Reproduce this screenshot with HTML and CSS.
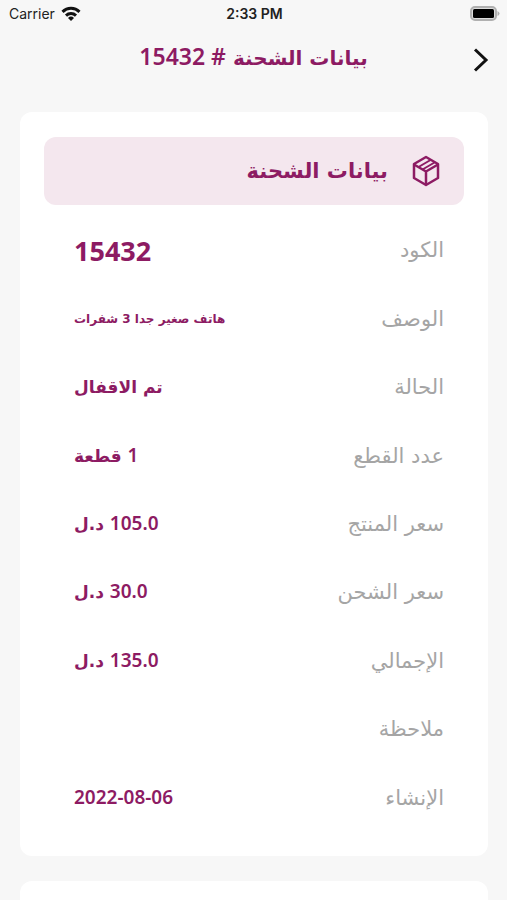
FILE: index.html
```html
<!DOCTYPE html>
<html lang="ar" dir="rtl">
<head>
    <meta charset="UTF-8">
    <meta name="viewport" content="width=device-width, initial-scale=1.0">
    <title>بيانات الشحنة</title>
    <link rel="stylesheet" href="styles.css">
</head>
<body>
    <div class="status" dir="ltr">
        <span class="carrier">Carrier
            <svg width="20" height="16" viewBox="0 0 20 16" fill="none" stroke="#111" stroke-width="3">
                <path d="M1.5 5.8a12.2 12.2 0 0 1 17 0"/>
                <path d="M5 9.6a7.2 7.2 0 0 1 10 0"/>
                <path d="M10 15l-3-3.1a4.3 4.3 0 0 1 6 0z" fill="#111" stroke="none"/>
            </svg>
        </span>
        <span class="time">2:33 PM</span>
        <span class="battery">
            <svg width="31" height="15" viewBox="0 0 31 15">
                <rect x="2" y="1" width="25" height="13" rx="4" fill="#ddd" stroke="#b0b0b0" stroke-width="2"/>
                <rect x="4" y="3" width="21" height="9" rx="1.5" fill="#000"/>
                <path d="M28.5 5v5q2-1 2-2.5t-2-2.5z" fill="#b0b0b0"/>
            </svg>
        </span>
    </div>
    <header class="top">
        <button class="back" aria-label="رجوع">
            <svg width="16" height="24" viewBox="0 0 16 24" fill="none" stroke="#111" stroke-width="3">
                <path d="M2 1.5L13 12L2 22.5"/>
            </svg>
        </button>
        <h1>بيانات الشحنة <span class="num"># 15432</span></h1>
    </header>
    <main>
        <section class="card">
            <h2>
                <svg width="28" height="32" viewBox="0 0 28 32" fill="none" stroke="#8d1b63" stroke-width="2.5" stroke-linejoin="round">
                    <path d="M14 2L26 9V23L14 30L2 23V9z"/>
                    <path d="M2 9.5L14 16.5L26 9.5M14 16.5V30"/>
                    <path d="M6.5 12L18.5 5M10.5 14.5L22.5 7.5" stroke-width="2"/>
                </svg>
                بيانات الشحنة
            </h2>
            <dl>
                <div class="row"><dt>الكود</dt><dd class="big">15432</dd></div>
                <div class="row"><dt>الوصف</dt><dd class="small">هاتف صغير جدا 3 شفرات</dd></div>
                <div class="row"><dt>الحالة</dt><dd>تم الاقفال</dd></div>
                <div class="row"><dt>عدد القطع</dt><dd><span class="num">1</span> قطعة</dd></div>
                <div class="row"><dt>سعر المنتج</dt><dd><span class="num">105.0</span> د.ل</dd></div>
                <div class="row"><dt>سعر الشحن</dt><dd><span class="num">30.0</span> د.ل</dd></div>
                <div class="row"><dt>الإجمالي</dt><dd><span class="num">135.0</span> د.ل</dd></div>
                <div class="row"><dt>ملاحظة</dt><dd></dd></div>
                <div class="row"><dt>الإنشاء</dt><dd><span class="num">2022-08-06</span></dd></div>
            </dl>
        </section>
        <section class="card next"></section>
    </main>
</body>
</html>
```

FILE: styles.css
```css
*{
 box-sizing: border-box;
}
body{
 margin: 0;
 min-height: 100vh;
 display: flex;
 flex-direction: column;
 background-color: #f7f7f7;
 color: #8d1b63;
 font-family: "DejaVu Sans", sans-serif;
}
.status{
 display: grid;
 grid-template-columns: 1fr auto 1fr;
 align-items: center;
 height: 27px;
 padding: 0 7px 0 9px;
 color: #222;
 font: 14px Inter, sans-serif;
}
.carrier{
 display: flex;
 align-items: center;
 gap: 6px;
}
.time{
 font-weight: 600;
}
.battery{
 display: flex;
 justify-content: flex-end;
}
.top{
 display: grid;
 grid-template-columns: 52px 1fr 52px;
 align-items: center;
 height: 65px;
}
.back{
 display: flex;
 justify-content: center;
 padding: 0;
 border: none;
 background: none;
}
.num{
 font-family: "Noto Sans", sans-serif;
 font-size: 19px;
 font-weight: 600;
 line-height: 1;
}
h1{
 margin: 0;
 padding-bottom: 4px;
 font-size: 20px;
 text-align: center;
}
h1 .num{
 font-size: 23px;
}
main{
 flex: 1;
 display: flex;
 flex-direction: column;
 gap: 25px;
 padding: 20px 19px 0 20px;
}
.card{
 padding: 25px 24px 24px;
 border-radius: 12px;
 background-color: #fff;
}
.next{
 flex: 1;
 padding: 0;
 border-radius: 12px 12px 0 0;
}
h2{
 display: flex;
 align-items: center;
 gap: 24px;
 height: 68px;
 margin: 0;
 padding: 0 24px;
 border-radius: 12px;
 background-color: #f4e7ee;
 font-size: 21px;
}
dl{
 display: grid;
 grid-auto-rows: 1fr;
 min-height: 616px;
 margin: 11px 0 0;
 padding: 0 20px 0 30px;
}
.row{
 display: flex;
 align-items: center;
 justify-content: space-between;
}
dt{
 color: #a5a5a5;
 font-size: 21px;
}
dd{
 margin: 0;
 font-size: 17px;
 font-weight: bold;
}
.big{
 font-family: "Noto Sans", sans-serif;
 font-size: 27px;
}
.small{
 font-size: 12px;
}
```
